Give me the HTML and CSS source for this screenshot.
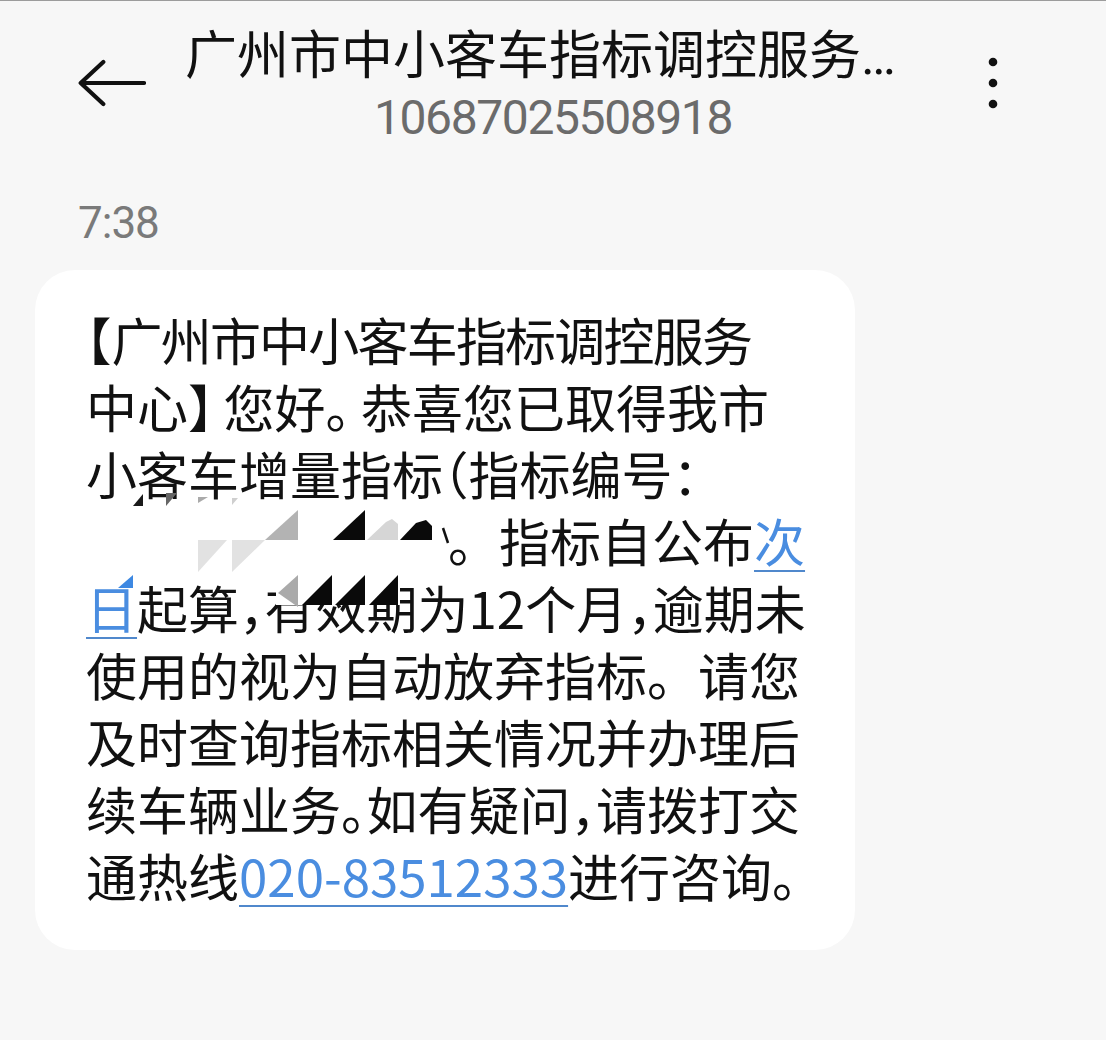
FILE: index.html
```html
<!DOCTYPE html>
<html lang="zh-CN">
<head>
<meta charset="utf-8">
<title>广州市中小客车指标调控服务中心</title>
<link rel="stylesheet" href="styles.css">
</head>
<body>
<div class="screen">
  <header class="topbar">
    <div class="nav-left">
      <svg class="back" width="68" height="48" viewBox="0 0 68 48" aria-label="返回">
        <path d="M25.3 3 L2.7 24 L25.3 45 M2.7 24 H66" fill="none" stroke="#111" stroke-width="4.2" stroke-linecap="round" stroke-linejoin="round"/>
      </svg>
    </div>
    <div class="contact">
      <div class="name">广州市中小客车指标调控服务中心</div>
      <div class="number">10687025508918</div>
    </div>
    <div class="nav-right">
      <svg class="more" width="12" height="54" viewBox="0 0 12 54" aria-label="更多">
        <circle cx="6" cy="6" r="4.3" fill="#111"/>
        <circle cx="6" cy="27" r="4.3" fill="#111"/>
        <circle cx="6" cy="48" r="4.3" fill="#111"/>
      </svg>
    </div>
  </header>

  <div class="time">7:38</div>

  <div class="bubble">
    <p class="msg"><span class="p-half">【</span><span class="tight">广州市中小客车指标调控服务</span><br>中心<span class="p-mid">】</span>您好<span class="p-mid">。</span>恭喜您已取得我市<br>小客车增量指标<span class="p-half">（</span>指标编号：<br><span class="redacted"></span>。指标自公布<a class="link">次<br>日</a>起算<span class="p-half">，</span>有效期为12个月<span class="p-half">，</span>逾期未<br>使用的视为自动放弃指标。请您<br>及时查询指标相关情况并办理后<br>续车辆业务<span class="p-half">。</span>如有疑问<span class="p-half">，</span>请拨打交<br>通热线<a class="link">020-83512333</a>进行咨询。</p>
    <svg class="mosaic" width="820" height="680" viewBox="35 270 820 680" aria-hidden="true">
      <polygon points="133,506 143,494 143,506" fill="#1a1a1a"/>
      <polygon points="166,493 177,493 166,506" fill="#666"/>
      <polygon points="198,497 208,497 198,503" fill="#aaa"/>
      <polygon points="232,498 238,498 232,505" fill="#cfcfcf"/>
      <polygon points="198,540 227,540 198,572" fill="#e2e2e2"/>
      <polygon points="232,540 265,540 232,572" fill="#e2e2e2"/>
      <polygon points="265,540 298,510 298,540" fill="#b3b3b3"/>
      <polygon points="333,540 365,510 365,540" fill="#0a0a0a"/>
      <polygon points="367,540 386,522 392,519 398,524 398,540" fill="#d6d6d6"/>
      <polygon points="400,540 416,523 426,520 432,526 432,540" fill="#0a0a0a"/>
      <path d="M443 528 L448 543" stroke="#111" stroke-width="2.5"/>
      <rect x="276" y="574" width="124" height="31" fill="#fff"/>
      <polygon points="298,575 298,607 278,593" fill="#aaa"/>
      <polygon points="302,605 332,575 332,605" fill="#0a0a0a"/>
      <polygon points="335,605 365,575 365,605" fill="#0a0a0a"/>
      <polygon points="369,605 398,575 398,605" fill="#0a0a0a"/>
      <polygon points="118,588 133,575 133,588" fill="#3d88e2"/>
    </svg>
  </div>
</div>
</body>
</html>
```

FILE: styles.css
```css
html, body {
  margin: 0;
  padding: 0;
}

body {
  background: #f7f7f7;
  width: 1106px;
  height: 1040px;
  overflow: hidden;
}

.screen {
  border-top: 1px solid #9c9c9c;
  display: flex;
  flex-direction: column;
}

.topbar {
  display: grid;
  grid-template-columns: 1fr auto 1fr;
  align-items: center;
  padding-top: 25px;
}

.nav-left {
  padding-left: 78px;
  display: flex;
}

.nav-right {
  justify-self: end;
  padding-right: 107px;
  display: flex;
}

.back,
.more {
  display: block;
  margin-bottom: 6px;
}

.contact {
  display: flex;
  flex-direction: column;
  align-items: center;
}

.name {
  max-width: 736px;
  white-space: nowrap;
  overflow: hidden;
  text-overflow: ellipsis;
  font-family: Roboto, "Noto Sans CJK SC", sans-serif;
  font-size: 52px;
  line-height: 62px;
  font-weight: 400;
  color: #111;
}

.number {
  margin-top: 2px;
  font-family: Roboto, "Noto Sans", sans-serif;
  font-size: 48px;
  line-height: 56px;
  letter-spacing: -1.4px;
  color: #6b6b6b;
}

.time {
  margin-top: 51px;
  padding-left: 78px;
  font-family: Roboto, "Noto Sans", sans-serif;
  font-size: 44px;
  line-height: 52px;
  letter-spacing: -1px;
  color: #7a7a7a;
}

.bubble {
  position: relative;
  margin-top: 21px;
  margin-left: 35px;
  width: 820px;
  box-sizing: border-box;
  padding: 36px 0 41px 51px;
  background: #fff;
  border-radius: 40px;
}

.msg {
  margin: 0;
  white-space: nowrap;
  font-family: "Noto Sans CJK SC", sans-serif;
  font-size: 51px;
  line-height: 67px;
  color: #111;
}

.tight {
  letter-spacing: -1.8px;
}

.p-half {
  font-feature-settings: "halt";
}

.p-mid {
  font-feature-settings: "halt";
  letter-spacing: 10px;
}

.redacted {
  display: inline-block;
  width: 362px;
}

.link {
  color: #4a8de0;
  text-decoration: underline;
  text-decoration-thickness: 2px;
  text-underline-offset: 8px;
  text-decoration-color: #5088cc;
}

.mosaic {
  position: absolute;
  left: 0;
  top: 0;
  pointer-events: none;
}
```
